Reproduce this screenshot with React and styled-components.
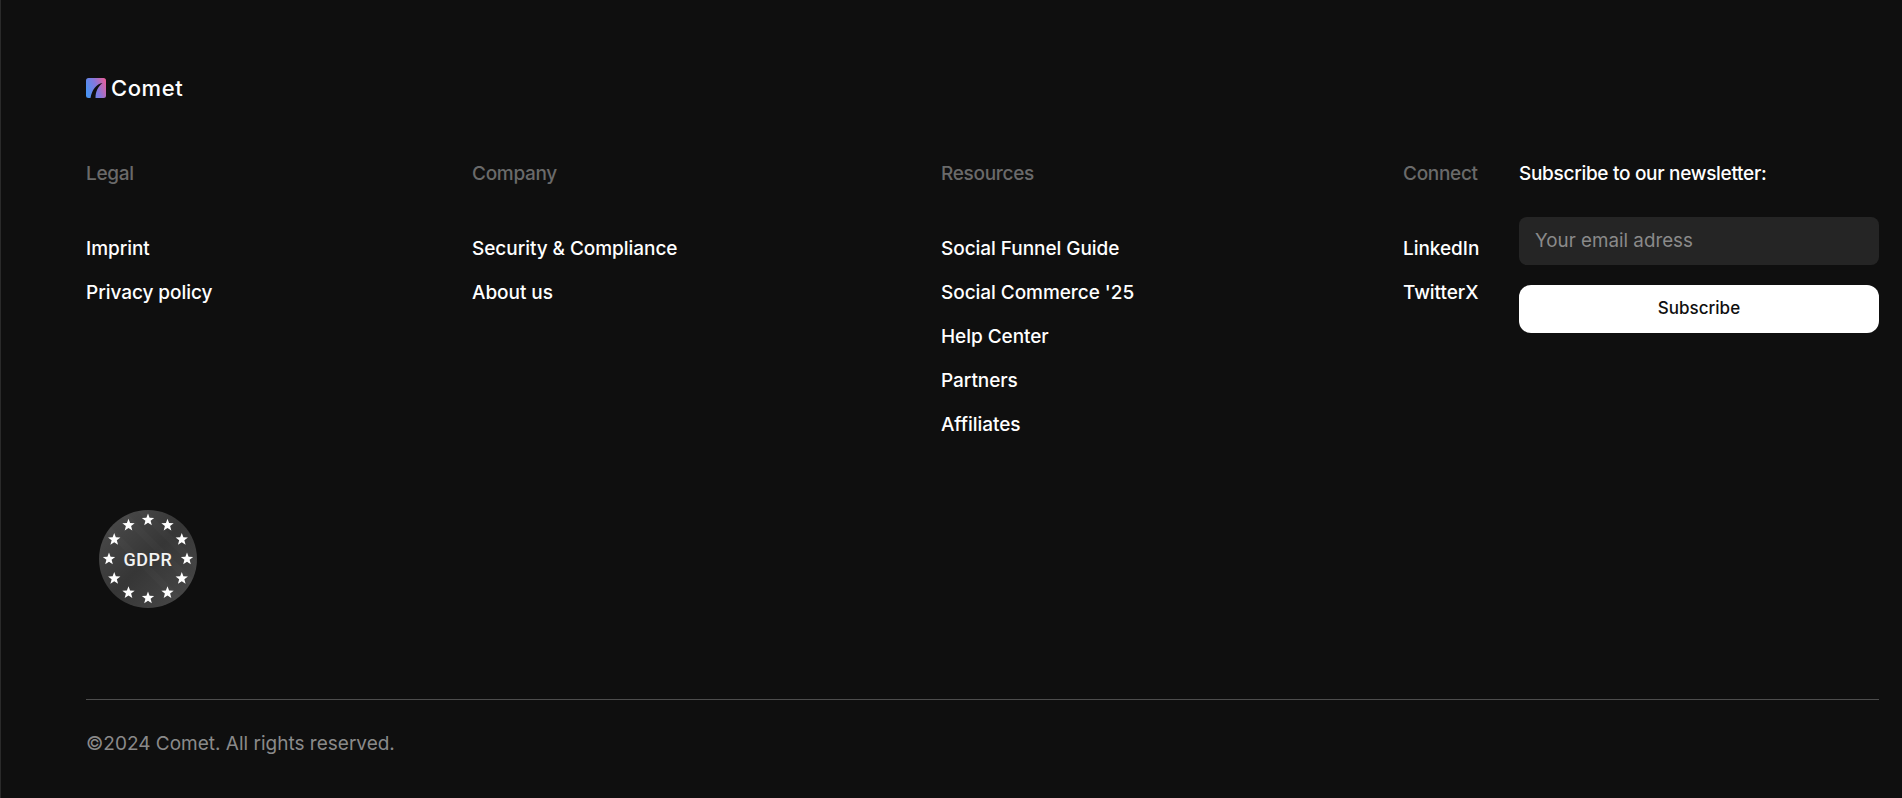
import React from 'react';
import styled, { createGlobalStyle } from 'styled-components';

const GlobalStyle = createGlobalStyle`
  html, body {
    margin: 0;
    background: #0f0f0f;
  }
  * {
    box-sizing: border-box;
  }
`;

const Footer = styled.footer`
  height: 798px;
  padding: 78px 23px 0 85px;
  background: #0f0f0f;
  border-left: 1px solid #2a2a2a;
  font-family: Inter, "Liberation Sans", sans-serif;
  color: #fff;
  overflow: hidden;
`;

const Brand = styled.div`
  display: flex;
  align-items: center;
  gap: 5px;
  height: 20px;
  font-size: 22px;
  font-weight: 450;
  letter-spacing: 0.6px;
`;

const Columns = styled.div`
  display: grid;
  grid-template-columns: 386px 469px 462px 116px 360px;
  margin-top: 64px;
  height: 347px;
`;

const Heading = styled.h4`
  margin: 0 0 49px;
  font-size: 19px;
  line-height: 24px;
  font-weight: 500;
  letter-spacing: -0.3px;
  color: ${(props) => (props.$light ? '#fff' : '#6a6a6a')};
`;

const Links = styled.ul`
  display: flex;
  flex-direction: column;
  gap: 16px;
  margin: 0;
  padding: 0;
  list-style: none;
`;

const Item = styled.a`
  display: block;
  font-size: 19px;
  line-height: 28px;
  font-weight: 450;
  letter-spacing: -0.05px;
  color: #fff;
  text-decoration: none;
`;

const Email = styled.input`
  display: block;
  width: 100%;
  height: 48px;
  margin-top: -18px;
  padding: 0 16px 1px;
  border: 0;
  border-radius: 8px;
  background: #252525;
  font-family: inherit;
  font-size: 18.800px;
  color: #fff;
  &::placeholder {
    color: #8a8a8a;
    opacity: 1;
  }
`;

const Button = styled.button`
  display: block;
  width: 100%;
  height: 48px;
  margin-top: 20px;
  padding: 0 0 2px;
  border: 0;
  border-radius: 12px;
  background: #fff;
  font-family: inherit;
  font-size: 17px;
  font-weight: 500;
  color: #0f0f0f;
`;

const Badge = styled.div`
  width: 100px;
  height: 100px;
  margin: 0 0 0 12px;
`;

const Divider = styled.hr`
  height: 1px;
  margin: 90px 0 0;
  border: 0;
  background: #4d4d4d;
`;

const Copyright = styled.p`
  margin: 30px 0 0;
  font-size: 19px;
  line-height: 28px;
  font-weight: 400;
  color: #8a8a8a;
`;

const columns = [
  { title: 'Legal', links: ['Imprint', 'Privacy policy'] },
  { title: 'Company', links: ['Security & Compliance', 'About us'] },
  {
    title: 'Resources',
    links: ['Social Funnel Guide', "Social Commerce '25", 'Help Center', 'Partners', 'Affiliates'],
  },
  { title: 'Connect', links: ['LinkedIn', 'TwitterX'] },
];

const CometMark = () => (
  <svg width="20" height="20" viewBox="0 0 20 20">
    <defs>
      <linearGradient id="comet" x1="0" y1="0.6" x2="1" y2="0.2">
        <stop offset="0" stopColor="#4a93f2" />
        <stop offset="0.5" stopColor="#8478dc" />
        <stop offset="1" stopColor="#e65f9c" />
      </linearGradient>
    </defs>
    <rect width="20" height="20" rx="2.500" fill="url(#comet)" />
    <path d="M16.500 5C10.500 6 6 11.500 4.500 20H9.500C9.500 14 11.500 9 16.500 5Z" fill="#0f0f0f" />
  </svg>
);

// star points, outer and inner radius alternating
const starPoints = (cx, cy, r) => {
  const points = [];
  for (let i = 0; i < 10; i += 1) {
    const radius = i % 2 === 0 ? r : r * 0.42;
    const angle = -Math.PI / 2 + (i * Math.PI) / 5;
    points.push(`${(cx + radius * Math.cos(angle)).toFixed(2)},${(cy + radius * Math.sin(angle)).toFixed(2)}`);
  }
  return points.join(' ');
};

const GdprBadge = () => (
  <Badge>
    <svg width="100" height="100" viewBox="0 0 100 100">
      <defs>
        <linearGradient id="disc" x1="0" y1="0" x2="1" y2="1">
          <stop offset="0" stopColor="#4e4e4e" />
          <stop offset="0.5" stopColor="#363636" />
          <stop offset="1" stopColor="#4a4a4a" />
        </linearGradient>
        <clipPath id="discClip">
          <circle cx="50" cy="50" r="49" />
        </clipPath>
      </defs>
      <circle cx="50" cy="50" r="49" fill="url(#disc)" />
      <g clipPath="url(#discClip)" stroke="#fff" strokeOpacity="0.02" strokeWidth="7">
        <path d="M20 0L100 80M5 15L85 95M38 -4L108 66" />
      </g>
      {Array.from({ length: 12 }).map((_, i) => {
        const angle = (i * Math.PI) / 6;
        return (
          <polygon
            key={i}
            points={starPoints(50 + 39 * Math.sin(angle), 50 - 39 * Math.cos(angle), 6.500)}
            fill="#fff"
          />
        );
      })}
      <text
        x="50"
        y="56.500"
        textAnchor="middle"
        fontFamily="Roboto, sans-serif"
        fontSize="18"
        fontWeight="500"
        letterSpacing="0.5"
        fill="#f2f2f2"
      >
        GDPR
      </text>
    </svg>
  </Badge>
);

export default function App() {
  return (
    <>
      <GlobalStyle />
      <Footer>
        <Brand>
          <CometMark />
          Comet
        </Brand>
        <Columns>
          {columns.map((column) => (
            <div key={column.title}>
              <Heading>{column.title}</Heading>
              <Links>
                {column.links.map((link) => (
                  <li key={link}>
                    <Item href="#">{link}</Item>
                  </li>
                ))}
              </Links>
            </div>
          ))}
          <div>
            <Heading $light>Subscribe to our newsletter:</Heading>
            <Email placeholder="Your email adress" />
            <Button>Subscribe</Button>
          </div>
        </Columns>
        <GdprBadge />
        <Divider />
        <Copyright>©2024 Comet. All rights reserved.</Copyright>
      </Footer>
    </>
  );
}
